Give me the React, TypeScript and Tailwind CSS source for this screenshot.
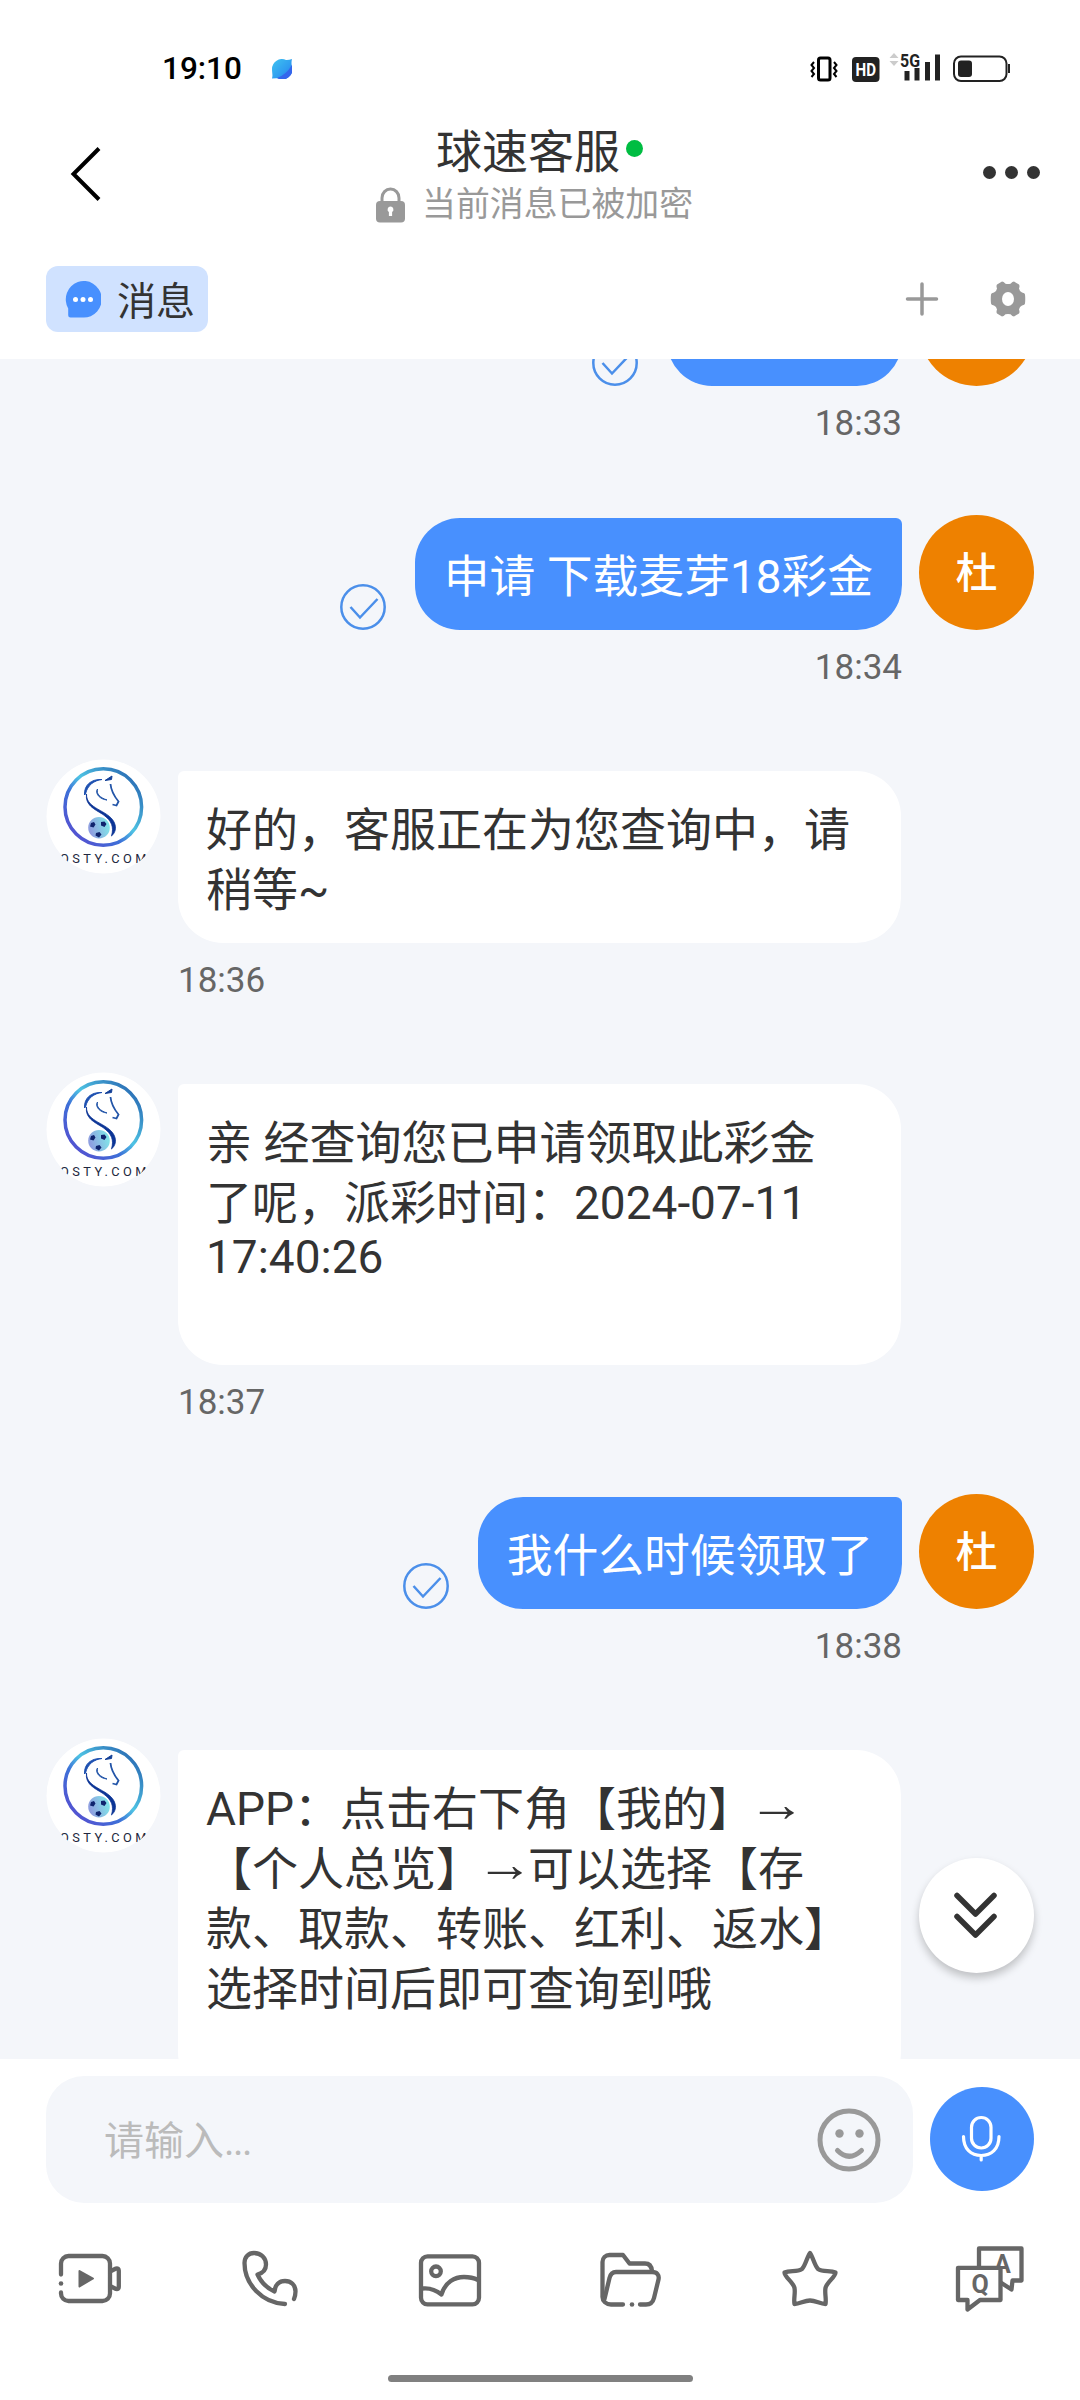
import type { ReactNode } from "react";

interface Message {
  id: number;
  from: "me" | "agent";
  lines: string[];
  time?: string;
  // scrolled under the header, only the lower edge of the bubble shows
  clipped?: boolean;
}

const MESSAGES: Message[] = [
  { id: 1, from: "me", lines: [], time: "18:33", clipped: true },
  { id: 2, from: "me", lines: ["申请 下载麦芽18彩金"], time: "18:34" },
  { id: 3, from: "agent", lines: ["好的，客服正在为您查询中，请", "稍等~"], time: "18:36" },
  {
    id: 4,
    from: "agent",
    lines: ["亲 经查询您已申请领取此彩金", "了呢，派彩时间：2024-07-11", "17:40:26", ""],
    time: "18:37",
  },
  { id: 5, from: "me", lines: ["我什么时候领取了"], time: "18:38" },
  {
    id: 6,
    from: "agent",
    lines: [
      "APP：点击右下角【我的】→",
      "【个人总览】→可以选择【存",
      "款、取款、转账、红利、返水】",
      "选择时间后即可查询到哦",
      "",
    ],
  },
];

function StatusBar() {
  return (
    <div className="h-[100px] pt-[38px] pl-[162px] pr-[69px] flex justify-between shrink-0">
      <div className="h-[62px] flex items-center">
        <span className="text-[31.5px] leading-[62px] font-medium text-black w-[110px]">19:10</span>
        <svg width="20" height="20" viewBox="0 0 20 20">
          <defs>
            <linearGradient id="planet" x1="0" y1="0" x2="1" y2="1">
              <stop offset="0" stopColor="#3fc4f0" />
              <stop offset="0.6" stopColor="#2f9cf0" />
              <stop offset="1" stopColor="#3568ee" />
            </linearGradient>
          </defs>
          <path d="M0 19.5C1 16 0 14 0 10A10 10 0 0 1 14 .9Q17 1 20 0Q19 4 20 7.500A10 10 0 0 1 6 19.200Q3 19 0 19.500Z" fill="url(#planet)" />
          <path d="M20 6Q14 16 5 19A10 10 0 0 0 20 8Z" fill="#3566ec" />
        </svg>
      </div>
      <svg width="202" height="62" viewBox="809 38 202 62" fill="none">
        <rect x="818.500" y="58" width="11.500" height="22" rx="2" stroke="#000" strokeWidth="3" />
        <path d="M814 62l-2.500 3 2.500 3-2.500 3 2.500 3-2.500 3M834 62l2.500 3-2.500 3 2.500 3-2.500 3 2.500 3" stroke="#000" strokeWidth="2" />
        <rect x="852" y="57" width="27.500" height="25" rx="4" fill="#222" />
        <text x="855.500" y="76" fontSize="19" fontWeight="700" fill="#fff" textLength="20.500" lengthAdjust="spacingAndGlyphs">HD</text>
        <path d="M889.500 58l4.500-5 4.500 5zM889.500 61l4.500 5 4.500-5z" fill="#ccc" />
        <text x="900" y="66.500" fontSize="18.500" fontWeight="700" fill="#222" textLength="20" lengthAdjust="spacingAndGlyphs">5G</text>
        <path d="M904.500 71h5v9.500h-5zM914.500 68h5v12.500h-5zM925 62h5v18.500h-5zM935 54.500h5v26h-5z" fill="#222" />
        <rect x="954" y="56.500" width="52.500" height="24.500" rx="7" stroke="#222" strokeWidth="2" />
        <rect x="958" y="60.500" width="14" height="16.500" rx="3" fill="#222" />
        <path d="M1009 64v9" stroke="#222" strokeWidth="2" />
      </svg>
    </div>
  );
}

function Header() {
  return (
    <div className="h-[148px] pl-[70px] pr-[40px] flex items-center shrink-0">
      <svg width="32" height="54" viewBox="0 0 32 54" fill="none" stroke="#000" strokeWidth="4">
        <path d="M29 1.500L3.500 27L29 52.500" />
      </svg>
      <div className="h-full flex-1 flex flex-col items-start pt-[25px] pl-[274px]">
        <div className="flex pl-[60px]">
          <span className="text-[46px] leading-[54px] text-[#333]">球速客服</span>
          <span className="w-[17px] h-[17px] rounded-full bg-[#00bd42] mt-[15px] ml-[6px]" />
        </div>
        <div className="flex items-center gap-[17px]">
          <svg width="29" height="36" viewBox="0 0 29 36">
            <path d="M6 16V11a8.500 9 0 0 1 17 0v5" fill="none" stroke="#999" strokeWidth="3" />
            <rect y="14" width="29" height="21.500" rx="4" fill="#999" />
            <path d="M14.500 19.500a3 3 0 0 1 1.600 5.500v4h-3.200v-4a3 3 0 0 1 1.600-5.500z" fill="#fff" />
          </svg>
          <span className="text-[33.9px] leading-[52px] text-[#999]">当前消息已被加密</span>
        </div>
      </div>
      <div className="flex gap-[9px] pb-[4px]">
        <span className="w-[13px] h-[13px] rounded-full bg-[#333]" />
        <span className="w-[13px] h-[13px] rounded-full bg-[#333]" />
        <span className="w-[13px] h-[13px] rounded-full bg-[#333]" />
      </div>
    </div>
  );
}

function TabRow() {
  return (
    <div className="h-[111px] pb-[9px] pl-[46px] pr-[54px] flex items-center justify-between shrink-0">
      <div className="w-[162px] h-[66px] rounded-[12px] bg-[#d0e2ff] flex items-center pl-[19px] gap-[16px]">
        <svg width="36" height="37" viewBox="0 0 36 37">
          <path d="M3.200 27.500A18 18.300 0 1 1 18 36.600H5.500Q3 36.600 3.200 34Z" fill="#4890fe" />
          <circle cx="10.500" cy="18.500" r="2.500" fill="#fff" />
          <circle cx="18" cy="18.500" r="2.500" fill="#fff" />
          <circle cx="25.500" cy="18.500" r="2.500" fill="#fff" />
        </svg>
        <span className="pt-[5px] text-[39px] leading-[60px] text-[#333] whitespace-nowrap">消息</span>
      </div>
      <div className="flex items-center gap-[51px]">
        <svg width="34" height="34" viewBox="0 0 34 34" stroke="#999" strokeWidth="3.500" strokeLinecap="round">
          <path d="M17 2v30M2.500 17h29" />
        </svg>
        <svg width="36" height="36" viewBox="-18 -18 36 36">
          <path
            d="M-6 -17.500Q-4.500 -17.500 -2.500 -15.300Q0 -14.600 2.500 -15.300Q4.500 -17.500 6 -17.500L11 -14.500Q12 -13 11 -10.500Q11.500 -7.500 14 -6.500Q17 -6 17 -4.500Q17.500 0 17 4.500Q17 6 14 6.500Q11.500 7.500 11 10.500Q12 13 11 14.500L6 17.500Q4.500 17.500 2.500 15.300Q0 14.600 -2.500 15.300Q-4.500 17.500 -6 17.500L-11 14.500Q-12 13 -11 10.500Q-11.500 7.500 -14 6.500Q-17 6 -17 4.500Q-17.500 0 -17 -4.500Q-17 -6 -14 -6.500Q-11.500 -7.500 -11 -10.500Q-12 -13 -11 -14.500Z"
            fill="#999"
          />
          <ellipse rx="6" ry="7" fill="#fff" />
        </svg>
      </div>
    </div>
  );
}

function AgentLogo() {
  return (
    <svg width="115" height="115" viewBox="0 0 115 115" className="rounded-full shrink-0">
      <defs>
        <linearGradient id="ring" x1="0.100" y1="0.900" x2="0.900" y2="0.100">
          <stop offset="0" stopColor="#5550d0" />
          <stop offset="0.350" stopColor="#3d70d8" />
          <stop offset="0.550" stopColor="#4fc4e4" />
          <stop offset="1" stopColor="#2a6cb4" />
        </linearGradient>
        <linearGradient id="ball" x1="0" y1="0.300" x2="1" y2="0">
          <stop offset="0" stopColor="#8f9fe0" />
          <stop offset="1" stopColor="#7ff0ea" />
        </linearGradient>
      </defs>
      <circle cx="57.500" cy="57.500" r="57" fill="#fff" />
      <circle cx="57.300" cy="48" r="38.300" fill="none" stroke="url(#ring)" strokeWidth="3.500" />
      <path d="M38.500 36C38 26 45 20 56 20.500C48 21.500 41.500 26 39.500 35Z" fill="#1c4fb0" stroke="#1c4fb0" />
      <path d="M59 21.500L66 17L65.500 20.500Z" fill="#123f96" stroke="#123f96" />
      <path d="M64.500 25C65 31 68 37 72.500 42.500L70.500 46.500L66.500 45.500" fill="none" stroke="#2355a8" strokeWidth="1.800" />
      <path d="M51.500 30C50 35 54 38.500 61 41C54.500 40.500 48.500 35 51.500 30Z" fill="#2355a8" stroke="#2355a8" />
      <path d="M40.500 35C40 50 62 51 68 63C71 69 69 74 65.500 77C68 68 66 62 57 55.500C48 50 39 46 40.500 35Z" fill="#0c3596" stroke="#0c3596" strokeWidth="0.800" />
      <circle cx="53" cy="68.700" r="10.800" fill="url(#ball)" />
      <path d="M45 64l3-1 1.500 2.500-2 3-3.500-1zM55 63l3.500-.5 2 2.500-2 3-3.500-1.500zM50 74l3.500-1 2 2.500-2.500 3-3.500-2z" fill="#10246e" />
      <text x="14" y="104" fontSize="12.800" fill="#222840" textLength="86.500" lengthAdjust="spacing">OSTY.COM</text>
    </svg>
  );
}

function SentCheck() {
  return (
    <svg width="46" height="46" viewBox="0 0 46 46" fill="none" stroke="#4b8fea" strokeWidth="2.500" className="shrink-0">
      <circle cx="23" cy="23" r="21.700" />
      <path d="M10.500 23L20 33.500L37.500 15" />
    </svg>
  );
}

function MyMessage({ message }: { message: Message }) {
  return (
    <div className="flex flex-col items-end pr-[46px]">
      <div className="flex items-end">
        <SentCheck />
        <div className="ml-[29px] min-w-[235px] h-[112px] px-[29px] pt-[30px] rounded-[45px] rounded-tr-[6px] bg-[#4890fe] text-white text-[45.8px] leading-[59px] whitespace-nowrap">
          {message.lines[0]}
        </div>
        <div className="ml-[17px] w-[115px] h-[115px] rounded-full bg-[#ee8100] text-white text-[42px] leading-[118px] font-medium text-center shrink-0">
          {message.clipped ? null : "杜"}
        </div>
      </div>
      <div className="mt-[18px] mb-[-1px] mr-[132px] text-[35px] leading-[40px] text-[#666]">{message.time}</div>
    </div>
  );
}

function Line({ text }: { text: string }) {
  // lines without CJK are a little shorter than the others
  if (/^[\d:]*$/.test(text)) {
    return <p className="h-[54.5px] leading-[49px]">{text}</p>;
  }
  return (
    <p className="h-[60px] leading-[60px] whitespace-nowrap">
      {text.split(/(→)/).map((part, i) =>
        part === "→" ? (
          <span key={i} className="inline-block h-[60px] align-top font-['Liberation_Sans',sans-serif] scale-x-125 scale-y-110 -translate-y-[6px]">
            →
          </span>
        ) : (
          part
        )
      )}
    </p>
  );
}

function AgentMessage({ message }: { message: Message }) {
  return (
    <div className="flex items-start pl-[46px]">
      <AgentLogo />
      <div className="ml-[17px] mt-[12px]">
        <div className="w-[723px] pl-[28px] pt-[29px] pb-[23px] rounded-[45px] rounded-tl-[6px] bg-white text-[46px] text-[#333]">
          {message.lines.map((line, i) => (
            <Line key={i} text={line} />
          ))}
        </div>
        {message.time && (
          <div className="mt-[18px] mb-[-1px] text-[35px] leading-[40px] text-[#666]">{message.time}</div>
        )}
      </div>
    </div>
  );
}

function Composer() {
  return (
    <div className="pl-[46px] pr-[46px] pt-[17px] flex items-center justify-between">
      <div className="w-[867px] h-[127px] rounded-[38px] bg-[#f4f6fa] pl-[58px] pr-[32px] flex items-center justify-between">
        <span className="pt-[4px] text-[40px] leading-[60px] text-[#bbb]">
          请输入<span className="-tracking-[1.5px]">...</span>
        </span>
        <svg width="64" height="64" viewBox="0 0 64 64" fill="none" stroke="#999" strokeWidth="5">
          <circle cx="32" cy="32" r="29" />
          <path d="M20.500 42.500Q32 54 44.500 42.500" strokeLinecap="round" />
          <circle cx="22.500" cy="25.500" r="4.200" fill="#999" stroke="none" />
          <circle cx="42.500" cy="25.500" r="4.200" fill="#999" stroke="none" />
        </svg>
      </div>
      <div className="w-[104px] h-[104px] mb-[2px] rounded-full bg-[#4890fe]">
        <svg width="104" height="104" viewBox="0 0 104 104" fill="none" stroke="#fff" strokeWidth="3.200" strokeLinecap="round">
          <rect x="41.500" y="30.500" width="19.500" height="30.500" rx="9.700" />
          <path d="M33.500 49.500C33.500 62 41 68.500 51.200 68.500S69 62 69 49.500M51.200 69v4" />
        </svg>
      </div>
    </div>
  );
}

function ToolIcon({ children }: { children: ReactNode }) {
  return (
    <div className="flex-1 flex justify-center">
      <svg width="72" height="72" viewBox="0 0 72 72" fill="none" stroke="#666" strokeWidth="4.300" strokeLinecap="round" strokeLinejoin="round">
        {children}
      </svg>
    </div>
  );
}

function Toolbar() {
  return (
    <div className="mt-[40px] flex">
      <ToolIcon>
        <path d="M7 31.500V20.500a7.500 7.500 0 0 1 7.500-7.500H48.500a7.500 7.500 0 0 1 7.500 7.500V50.500a7.500 7.500 0 0 1-7.500 7.500H14.500a7.500 7.500 0 0 1-7.500-7.500V49.500" />
        <circle cx="7" cy="40.500" r="2.300" fill="#666" stroke="none" />
        <path d="M57 28L62 25.500Q64.800 25 64.800 27.500V44Q64.800 46.500 62 46L57 43.500" />
        <path d="M25.500 28L39 35.500L25.500 43.500Z" fill="#666" strokeWidth="2" />
      </ToolIcon>
      <ToolIcon>
        <path d="M51 61C28 60 10.500 41 10.500 20C10.500 14 14.500 10 20 10C27 10 32 15 32 21.500C32 26 29 30 23.500 31.500C27 39 32.500 45 40.500 48.500C41 42 45 38 51 38C57 38 61.500 42 61.500 48.500C61.500 51 61 53.500 60 56" />
      </ToolIcon>
      <ToolIcon>
        <rect x="7" y="13.300" width="58" height="48" rx="6.500" />
        <circle cx="22" cy="28.300" r="4.800" />
        <path d="M8 45.500C16 44.500 22 47 27.500 51.500C31 39 41 34 50 34C56 34 60 35 64 37" />
      </ToolIcon>
      <ToolIcon>
        <path d="M29 61.500H17C12 61.500 8.500 58 8.500 54V19C8.500 15 11.500 12 15.500 12H29L35.500 20.500H51C55 20.500 57.500 23 58 28" />
        <path d="M10.500 56L15.500 35C16.500 31 18 29 22 29H58C63 29 65.500 32 64.500 36.500L60 55C59 59 56 61.500 52 61.500H46" />
        <circle cx="38" cy="61.500" r="2.300" fill="#666" stroke="none" />
      </ToolIcon>
      <ToolIcon>
        <path d="M36 10C39 14 40.500 22.500 44 26C49 29.500 56 27 61.500 29.500C61.500 34 52.500 39.500 51.500 45C50.500 50 52.500 56 51.500 61C46 61 42 57.500 36 57.500C30 57.500 26 61 20.500 61C19.500 56 21.500 50 20.500 45C19.500 39.500 10.500 34 10.500 29.500C16 27 23 29.500 28 26C31.500 22.500 33 14 36 10Z" />
      </ToolIcon>
      <ToolIcon>
        <path d="M25 23V5.500H67.500V37.500H58.500L57.500 46.500L47.500 40" />
        <text x="48.500" y="30" fontSize="25" fontWeight="700" fill="#666" stroke="none" textAnchor="middle">A</text>
        <path d="M4 24.800H46.500V57H26L13.500 66.500V57H4Z" fill="#fff" />
        <text x="26" y="49.500" fontSize="25" fontWeight="700" fill="#666" stroke="none" textAnchor="middle">Q</text>
      </ToolIcon>
    </div>
  );
}

export default function App() {
  return (
    <div className="w-[1080px] h-[2400px] overflow-hidden bg-white flex flex-col font-[Roboto,'Noto_Sans_CJK_SC',sans-serif]">
      <StatusBar />
      <Header />
      <TabRow />
      <div className="relative h-[1700px] shrink-0 overflow-hidden bg-[#f4f6fa]">
        {/* list is scrolled so the first row is cut by the header */}
        <div className="-mt-[88px] flex flex-col gap-[72px]">
          {MESSAGES.map((message) =>
            message.from === "me" ? (
              <MyMessage key={message.id} message={message} />
            ) : (
              <AgentMessage key={message.id} message={message} />
            )
          )}
        </div>
        <button className="absolute right-[46px] bottom-[86px] w-[115px] h-[115px] pr-[2px] pb-[2px] rounded-full bg-white shadow-[0_5px_9px_rgba(0,0,0,0.22)] flex items-center justify-center">
          <svg width="46" height="48" viewBox="0 0 46 48" fill="none" stroke="#333" strokeWidth="5.500" strokeLinecap="round" strokeLinejoin="round">
            <path d="M4 4.500L22.500 23L41 4.500M4 25.500L22.500 44L41 25.500" />
          </svg>
        </button>
      </div>
      <div className="flex-1 flex flex-col">
        <Composer />
        <Toolbar />
        <div className="mt-[60px] mx-auto w-[305px] h-[7px] rounded-full bg-[#808080]" />
      </div>
    </div>
  );
}
